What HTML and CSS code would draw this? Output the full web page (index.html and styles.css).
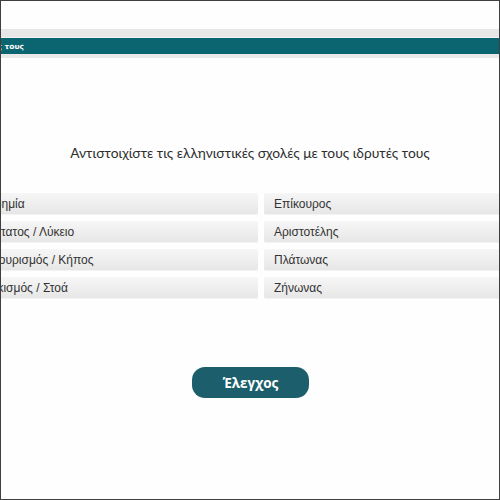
FILE: index.html
```html
<!DOCTYPE html>
<html lang="el">
<head>
<meta charset="utf-8">
<title>Αντιστοίχιση</title>
<link rel="stylesheet" href="styles.css">
</head>
<body>
<div class="frame">
  <header class="header">
    <div class="header-top"></div>
    <div class="header-bar">
      <div class="header-title"><span>Αντιστοιχίστε τις σχολές με τους ιδρυτές τους</span></div>
    </div>
    <div class="header-bottom"></div>
  </header>

  <h1 class="question">Αντιστοιχίστε τις ελληνιστικές σχολές με τους ιδρυτές τους</h1>

  <div class="matching">
    <div class="column column-left">
      <div class="item">Ακαδημία</div>
      <div class="item">Περίπατος / Λύκειο</div>
      <div class="item">Επικουρισμός / Κήπος</div>
      <div class="item">Στωικισμός / Στοά</div>
    </div>
    <div class="column column-right">
      <div class="item">Επίκουρος</div>
      <div class="item">Αριστοτέλης</div>
      <div class="item">Πλάτωνας</div>
      <div class="item">Ζήνωνας</div>
    </div>
  </div>

  <div class="actions">
    <button class="check-btn">Έλεγχος</button>
  </div>
</div>
</body>
</html>
```

FILE: styles.css
```css
html, body {
  margin: 0;
  padding: 0;
  background: #ffffff;
  overflow: hidden;
}

.frame {
  width: 500px;
  height: 500px;
  box-sizing: border-box;
  border: 1px solid #3f3f3f;
  overflow: hidden;
  background: #fefefe;
  font-family: "Liberation Sans", Arial, sans-serif;
}

.header {
  margin-top: 28px;
}

.header-top {
  height: 8px;
  background: #e7e7e7;
  border-bottom: 1px solid #f2f2f2;
}

.header-bar {
  height: 16px;
  background: #0a6570;
  display: flex;
  align-items: center;
}

.header-title {
  width: 23px;
  display: flex;
  justify-content: flex-end;
  white-space: nowrap;
  color: #ffffff;
  font-family: "DejaVu Sans", sans-serif;
  font-weight: bold;
  font-size: 7.5px;
}

.header-bottom {
  height: 4px;
  background: #e9e9e9;
}

.question {
  margin: 85px 0 0;
  height: 20px;
  line-height: 20px;
  text-align: center;
  font-family: Lato, "Open Sans", sans-serif;
  font-weight: normal;
  font-size: 13.8px;
  color: #2e2e2e;
}

.matching {
  margin-top: 30px;
  margin-left: -37px;
  display: flex;
  gap: 6px;
}

.column {
  width: 294px;
  flex: none;
  display: flex;
  flex-direction: column;
  gap: 6px;
}

.item {
  height: 22px;
  line-height: 22px;
  padding-left: 10px;
  border-radius: 2px;
  background: linear-gradient(#f6f6f6, #ebebeb 70%, #e5e5e5);
  box-shadow: inset 0 -1px 0 #f4f4f4;
  font-size: 12px;
  color: #333333;
  white-space: nowrap;
}

.actions {
  margin-top: 68px;
  display: flex;
  justify-content: center;
}

.check-btn {
  width: 117px;
  height: 31px;
  margin-left: 1px;
  border: none;
  border-radius: 13px;
  background: #1c5e6b;
  color: #ffffff;
  font-family: "Open Sans", sans-serif;
  font-weight: bold;
  font-size: 13.5px;
  padding: 0;
}
```
